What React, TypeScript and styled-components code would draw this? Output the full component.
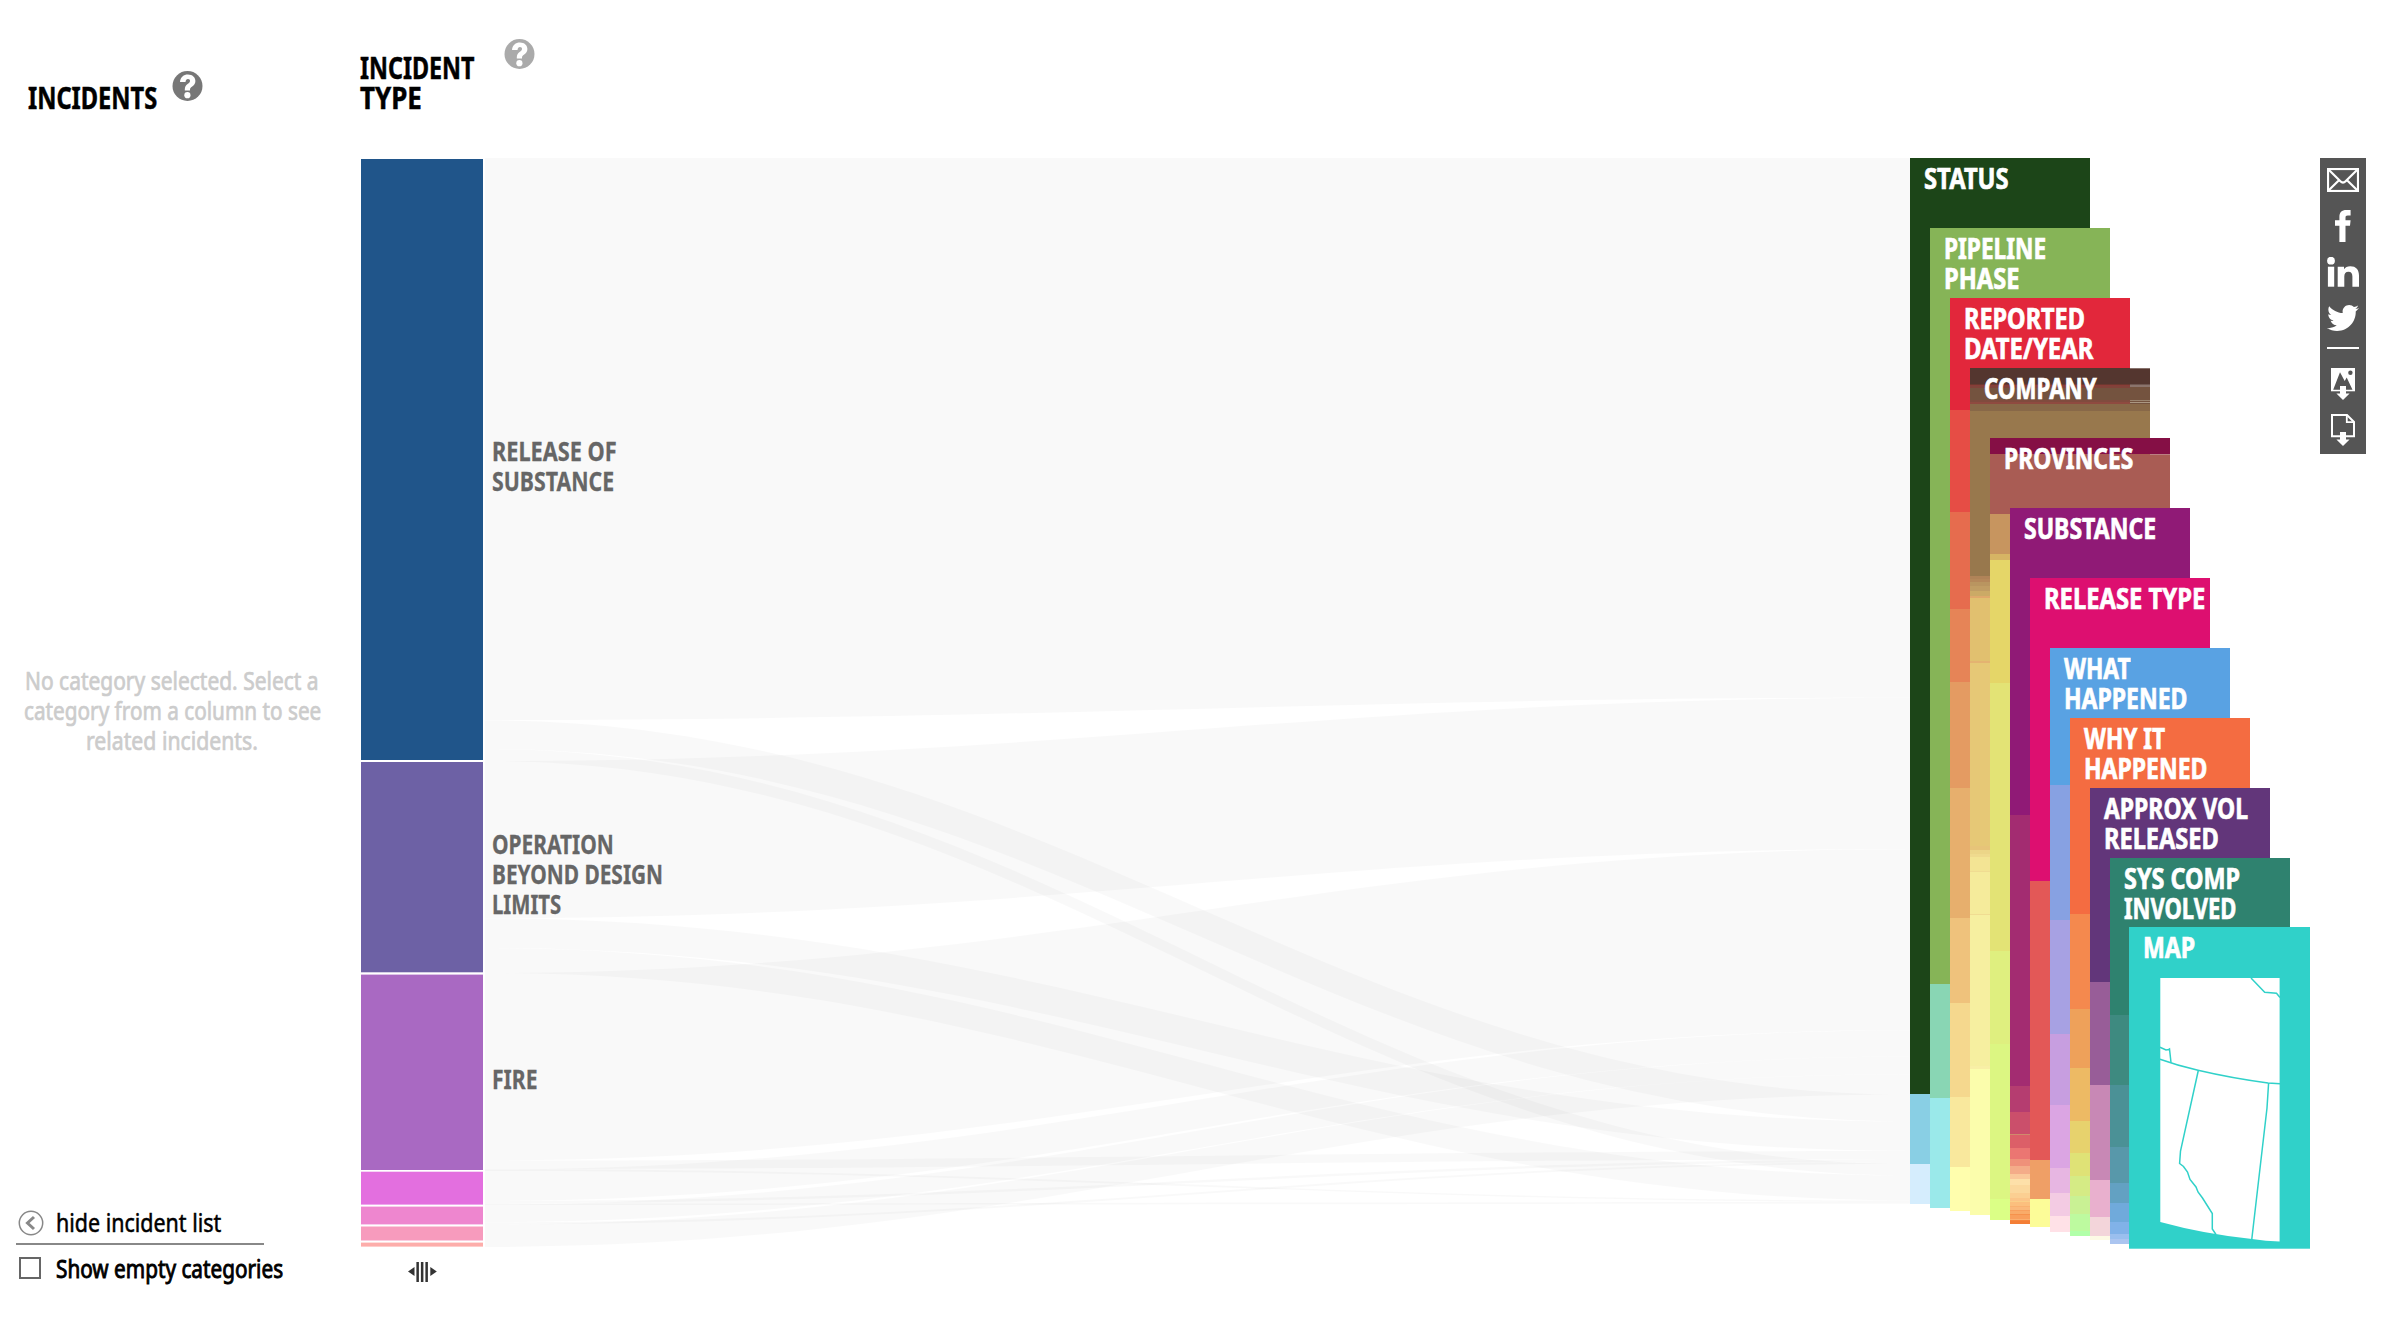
import React, { useLayoutEffect, useRef, useState } from "react";
import styled, { createGlobalStyle } from "styled-components";
import { FaTwitter } from "react-icons/fa";

const GlobalStyle = createGlobalStyle`
  * { box-sizing: border-box; }
  body { margin: 0; background: #fff; font-family: "Noto Sans", "Open Sans", sans-serif; }
`;

const Page = styled.div`
  display: flex;
  width: 2382px;
  height: 1320px;
  overflow: hidden;
  background: #fff;
`;

/* A line of type condensed to a set measure. */
const LineBox = styled.span<{ $width: number }>`
  display: block;
  width: ${(p) => p.$width}px;
  white-space: nowrap;
`;
const LineInner = styled.span`
  display: inline-block;
  transform-origin: 0 50%;
`;

function Line({ width, children }: { width: number; children: string }) {
  const ref = useRef<HTMLSpanElement>(null);
  const [scale, setScale] = useState(0.8);
  useLayoutEffect(() => {
    if (ref.current) setScale(width / ref.current.offsetWidth);
  }, [width]);
  return (
    <LineBox $width={width}>
      <LineInner ref={ref} style={{ transform: `scaleX(${scale})` }}>
        {children}
      </LineInner>
    </LineBox>
  );
}

type TextLine = [string, number];
const lines = (items: TextLine[]) =>
  items.map(([text, width], i) => (
    <Line key={i} width={width}>
      {text}
    </Line>
  ));

/* Incident list pane */
const IncidentPane = styled.aside`
  display: flex;
  flex-direction: column;
  flex: none;
  width: 361px;
`;
const PaneHeader = styled.header`
  display: flex;
  align-items: flex-start;
  height: 158px;
  padding: 71px 0 0 28px;
`;
const Heading = styled.h1<{ $drop?: number; $pull?: number }>`
  margin: ${(p) => p.$drop ?? 0}px 0 0 ${(p) => -(p.$pull ?? 0)}px;
  font-size: 29.5px;
  line-height: 30px;
  font-weight: 700;
  color: #000;
  -webkit-text-stroke: 0.5px #000;
`;
const HelpButton = styled.button<{ $color: string; $gap: number }>`
  margin: 0 0 0 ${(p) => p.$gap}px;
  padding: 0;
  border: 0;
  width: 31px;
  height: 31px;
  border-radius: 50%;
  background: none;
  color: ${(p) => p.$color};
  svg { display: block; }
`;
const EmptyMessage = styled.div`
  display: flex;
  flex-direction: column;
  align-items: center;
  flex: 1;
  padding: 507px 17px 0 0;
  font-size: 25px;
  line-height: 30px;
  color: #ccc;
  -webkit-text-stroke: 0.7px #ccc;
`;
const PaneFooter = styled.footer`
  display: flex;
  flex-direction: column;
  width: 248px;
  height: 112px;
  margin-left: 16px;
`;
const FooterRow = styled.div<{ $gap: number; $medium?: boolean }>`
  display: flex;
  align-items: center;
  gap: ${(p) => p.$gap}px;
  padding-left: 2px;
  font-size: 24.5px;
  line-height: 30px;
  color: #000;
  -webkit-text-stroke: ${(p) => (p.$medium ? 0.9 : 0.5)}px #000;
  svg { flex: none; -webkit-text-stroke: 0; }
`;
const Rule = styled.div`
  flex: none;
  height: 2px;
  margin: 5px 0 9px;
  background: #888;
`;
const Checkbox = styled.span`
  flex: none;
  width: 22px;
  height: 22px;
  margin: -3px 0 0 1px;
  border: 2px solid #666;
  background: #fff;
`;

/* Flow chart */
const ChartPane = styled.main`
  display: flex;
  flex-direction: column;
  flex: none;
  width: 1549px;
`;
const ChartHeader = styled.header`
  display: flex;
  align-items: flex-start;
  height: 158px;
  padding-top: 39px;
`;
const ChartArea = styled.div`
  position: relative;
  height: 1162px;
  svg { display: block; }
`;
const CategoryLabel = styled.div<{ $top: number }>`
  position: absolute;
  left: 130.7px;
  top: ${(p) => p.$top}px;
  font-size: 26px;
  line-height: 30px;
  font-weight: 700;
  color: #666;
  -webkit-text-stroke: 0.3px #666;
`;

/* Stacked columns */
const Stack = styled.section`
  display: flex;
  flex: none;
  width: 410px;
  height: 1320px;
`;
const Slot = styled.div<{ $top: number; $shift?: number }>`
  flex: none;
  width: 20px;
  padding-top: ${(p) => p.$top}px;
  margin-left: ${(p) => p.$shift ?? 0}px;
`;
const Column = styled.div`
  position: relative;
  width: 180px;
`;
const Segment = styled.div<{ $height: number; $color: string }>`
  height: ${(p) => p.$height}px;
  background: ${(p) => p.$color};
`;
const ColumnTitle = styled.h2<{ $left?: number }>`
  position: absolute;
  left: ${(p) => p.$left ?? 13.7}px;
  top: 4.5px;
  margin: 0;
  font-size: 28.5px;
  line-height: 30px;
  font-weight: 700;
  color: #fff;
  -webkit-text-stroke: 0.7px #fff;
`;
const Glint = styled.div<{ $top: number; $height: number; $color: string }>`
  position: absolute;
  right: 0;
  top: ${(p) => p.$top}px;
  width: 20px;
  height: ${(p) => p.$height}px;
  background: ${(p) => p.$color};
`;
const MapPanel = styled.div`
  position: relative;
  width: 181px;
  height: 322px;
  svg { display: block; }
`;

/* Share bar */
const ShareBar = styled.nav`
  display: flex;
  flex-direction: column;
  align-items: center;
  flex: none;
  width: 46px;
  height: 296px;
  margin-top: 158px;
  background: #555;
  color: #fff;
`;
const ShareItem = styled.a<{ $height: number; $pad: number }>`
  flex: none;
  height: ${(p) => p.$height}px;
  padding-top: ${(p) => p.$pad}px;
  svg { display: block; }
`;
const ShareDivider = styled.div`
  flex: none;
  width: 32px;
  height: 2px;
  background: #fff;
`;

function HelpIcon() {
  return (
    <svg width="31" height="31" viewBox="0 0 31 31">
      <circle cx="15.5" cy="15" r="15" fill="currentColor" />
      <path
        d="M8 11C8.4 6 11.6 3.4 16 3.4C20.4 3.4 23.4 6.2 23.4 10C23.4 12.8 22 14.2 20.2 15.5C18.6 16.7 18 17.2 18 19V19.4H12.8V18.6C12.8 15.6 13.8 14.4 15.6 13C17.2 11.8 18 11.2 18 9.8C18 8.6 17.2 7.9 16 7.9C14.6 7.9 13.7 8.9 13.5 11Z"
        fill="#fff"
      />
      <circle cx="15.4" cy="24.2" r="3.1" fill="#fff" />
    </svg>
  );
}

const CHART = { x0: 124, x1: 1549, top: 158 };

/* [left top, left bottom, right top, right bottom] */
const ribbons: number[][] = [
  [158, 720, 158, 697.7],
  [720.2, 749, 1094.5, 1121.5],
  [749, 761, 1164, 1175.5],
  [761, 918.2, 697.7, 849],
  [918.2, 948, 1121.5, 1151],
  [948, 973, 1175.5, 1200.5],
  [973, 1160.5, 849, 1030.3],
  [1160.5, 1169, 1151, 1159.5],
  [1169, 1171, 1200.5, 1202],
  [1169.5, 1201, 1030.3, 1056.6],
  [1201, 1203.5, 1159.5, 1162],
  [1203.5, 1205, 1202, 1203.7],
  [1204.5, 1222.3, 1056.6, 1074.2],
  [1222.3, 1224.5, 1162, 1164],
  [1224.5, 1247, 1074.2, 1094.5],
];

const bars: [number, number, string][] = [
  [159, 760, "#20558a"],
  [762, 972.3, "#6d61a5"],
  [974.6, 1170, "#a969c2"],
  [1171.7, 1204.6, "#e36fdf"],
  [1206.6, 1224.4, "#ee86cf"],
  [1226.5, 1240.5, "#f79bbd"],
  [1242.6, 1246.6, "#fdadaa"],
];

function ribbonPath([a, b, c, d]: number[]) {
  const { x0, x1, top } = CHART;
  const w = x1 - x0;
  const p = x0 + w * 0.4;
  const q = x1 - w * 0.4;
  return `M${x0} ${a - top}C${p} ${a - top} ${q} ${c - top} ${x1} ${c - top}V${d - top}C${q} ${d - top} ${p} ${b - top} ${x0} ${b - top}Z`;
}

function FlowChart() {
  return (
    <svg width="1549" height="1162" viewBox="0 0 1549 1162">
      {ribbons.map((r, i) => (
        <path key={i} d={ribbonPath(r)} fill="#000" fillOpacity="0.024" />
      ))}
      {bars.map(([a, b, color]) => (
        <rect key={a} x="0" y={a - CHART.top} width="122" height={b - a} fill={color} />
      ))}
      <g fill="#333">
        <path d="M47 1113.5L53.5 1109V1118Z" />
        <path d="M75.8 1113.5L69.3 1109V1118Z" />
        <rect x="55.4" y="1104" width="2.5" height="20" />
        <rect x="59.9" y="1104" width="2.5" height="20" />
        <rect x="64.4" y="1104" width="2.5" height="20" />
      </g>
    </svg>
  );
}

interface ColumnData {
  title: TextLine[];
  /* [start, colour]; each segment runs to the next one's start */
  segments: [number, string][];
  end: number;
  glints?: [number, number, string][];
}

const columns: ColumnData[] = [
  {
    title: [["STATUS", 85]],
    segments: [[158, "#1c4518"], [1094, "#89cfe4"], [1164, "#d5edfd"]],
    end: 1203.7,
  },
  {
    title: [["PIPELINE", 102.5], ["PHASE", 75.5]],
    segments: [[228, "#86b457"], [984.4, "#89d6b4"], [1098, "#9ae9ea"]],
    end: 1207.7,
  },
  {
    title: [["REPORTED", 121], ["DATE/YEAR", 129]],
    segments: [
      [298, "#e2273b"], [410, "#e64d45"], [512, "#e66c4e"], [609, "#e68457"], [682.4, "#e49b62"],
      [787.6, "#e7af6d"], [918.4, "#efc27c"], [1003, "#f5d88e"], [1097.4, "#f9e89d"], [1167, "#fffead"],
    ],
    end: 1211.4,
  },
  {
    title: [["COMPANY", 112.5]],
    segments: [
      [368, "#54362f"], [384, "#6b382f"], [385, "#883d38"], [386, "#80433a"], [388, "#74533f"], [400, "#804b3e"],
      [402, "#8f4a40"], [404, "#886848"],
      [411, "#98784d"], [576, "#b08358"], [579, "#b5885a"], [582, "#b99560"], [586, "#c09d64"], [591, "#cbaa66"],
      [596, "#dfa96b"], [598, "#e1c06f"], [661, "#e4b371"], [663, "#e6c876"], [846, "#e7c479"], [850, "#ecd588"],
      [854, "#efda8e"], [857, "#f3e494"], [871, "#f0dc92"], [872, "#f5eb9b"], [914, "#f0dc92"], [915, "#f6efa0"],
      [1066, "#f8efa6"], [1069, "#fbfdac"],
    ],
    end: 1215.4,
    glints: [[0, 1, "#87726d"], [16, 1, "#6f564f"], [17, 2, "#8b746c"], [19, 17, "#74533f"], [32, 1, "#9a846f"], [34, 1, "#ab9782"]],
  },
  {
    title: [["PROVINCES", 129]],
    segments: [
      [438, "#850f45"], [454, "#a95c54"], [514, "#c7955f"], [554, "#d6b464"], [559.5, "#e5d668"],
      [683, "#e3e375"], [951, "#dfef7f"], [1044, "#dcf682"], [1199, "#dbff86"],
    ],
    end: 1219.6,
    glints: [[16, 1, "#bb7e81"]],
  },
  {
    title: [["SUBSTANCE", 132.5]],
    segments: [
      [508, "#901a76"], [815, "#a32c71"], [1086.4, "#b53d70"], [1111.6, "#cb4f6b"], [1134, "#cf8a6c"], [1135, "#dc5f68"],
      [1148, "#eb7672"], [1159, "#ef917a"], [1166, "#f4ac89"], [1174, "#fac89a"], [1179, "#fde0a9"],
      [1185, "#fbd89d"], [1193, "#fbcf92"], [1198, "#fbc588"], [1201, "#facf88"], [1202, "#fbbf7e"], [1206, "#f9b170"],
      [1207, "#fab97b"], [1210, "#f8a05e"], [1211, "#f9ab69"], [1214, "#f6924c"], [1215, "#f99f5c"], [1219, "#fbb070"], [1220, "#f5853c"], [1221, "#f47e36"],
    ],
    end: 1223.6,
  },
  {
    title: [["RELEASE TYPE", 161]],
    segments: [[578, "#dd0f70"], [881, "#e35857"], [1160, "#ef9f66"], [1199, "#fcfc98"]],
    end: 1227.4,
  },
  {
    title: [["WHAT", 67], ["HAPPENED", 123.5]],
    segments: [
      [648, "#59a2e3"], [784.5, "#87a1e2"], [920, "#a7a1e3"], [1033.6, "#c79ee0"], [1105, "#dba5e3"],
      [1168, "#e7b6e2"], [1193, "#f3cbe3"], [1216, "#ffe1e7"],
    ],
    end: 1231.6,
  },
  {
    title: [["WHY IT", 81], ["HAPPENED", 123.5]],
    segments: [
      [718, "#f46c41"], [914, "#f4894e"], [1009, "#eea15a"], [1068, "#edba64"], [1121, "#e7d26d"],
      [1153, "#dfe276"], [1176, "#d5eb85"], [1196, "#c9f194"], [1214, "#bdfa9f"], [1231, "#b1ffa9"],
    ],
    end: 1235.6,
  },
  {
    title: [["APPROX VOL", 144], ["RELEASED", 115]],
    segments: [
      [788, "#62367a"], [982, "#985d98"], [1084.6, "#c888b5"], [1180, "#e9b0ce"], [1217, "#f3d5da"], [1236, "#fdfae5"],
    ],
    end: 1239.6,
  },
  {
    title: [["SYS COMP", 116.5], ["INVOLVED", 112.5]],
    segments: [
      [858, "#2f826f"], [1015, "#3e8a80"], [1085, "#4b9196"], [1147, "#5898aa"], [1183, "#63a1c2"],
      [1203, "#70aadb"], [1222, "#81b2e8"], [1234, "#9abfee"], [1239, "#abc5f0"],
    ],
    end: 1243.6,
  },
];

function StackColumn({ data }: { data: ColumnData }) {
  const top = data.segments[0][0];
  return (
    <Slot $top={top}>
      <Column>
        {data.segments.map(([start, color], i) => {
          const next = i + 1 < data.segments.length ? data.segments[i + 1][0] : data.end;
          return <Segment key={start} $height={next - start} $color={color} />;
        })}
        {data.glints?.map(([y, h, color]) => <Glint key={y} $top={y} $height={h} $color={color} />)}
        <ColumnTitle>{lines(data.title)}</ColumnTitle>
      </Column>
    </Slot>
  );
}

function RegionMap() {
  return (
    <svg width="181" height="322" viewBox="2129 927 181 322">
      <rect x="2129" y="927" width="181" height="321.7" fill="#30d1c9" />
      <path d="M2160.3 978H2279.6V1241.5Q2266 1241 2252 1239Q2204 1234 2160.3 1222Z" fill="#fff" />
      <g fill="none" stroke="#30d1c9" strokeWidth="1.5">
        <path d="M2251 978L2264.7 992.3L2276.5 993.3L2280 997.5" />
        <path d="M2160 1047.3L2166 1050L2168.7 1049.5L2169.5 1049L2171 1062.5" />
        <path d="M2160 1059.3Q2178 1065.8 2198 1070.3Q2232 1078.3 2268 1083L2280 1083.7" />
        <path d="M2198.3 1070.5L2180.5 1151L2179.6 1163.5L2183.5 1166.5L2187.5 1172L2190 1179.5L2196 1187L2198 1192L2202.5 1198L2212.3 1213.5V1229L2216 1234.5" />
        <path d="M2268.6 1083L2267 1108L2251.7 1240" />
      </g>
    </svg>
  );
}

function EnvelopeIcon() {
  return (
    <svg width="32" height="24" viewBox="0 0 32 24" fill="none" stroke="#fff" strokeWidth="2.2">
      <rect x="1" y="1" width="30" height="22" />
      <path d="M2 2L13.4 13.2Q16 15.8 18.6 13.2L30 2M2 22L12.2 12M30 22L19.8 12" />
    </svg>
  );
}
function FacebookIcon() {
  return (
    <svg width="16" height="32" viewBox="0 0 16 32" fill="#fff">
      <path d="M4.4 32V15.8H0V10.2H4.4V7.2C4.4 2.4 6.6 0 11.4 0H15.6V5.6H12.8C11 5.6 10.5 6.3 10.5 8V10.2H15.6L15 15.8H10.5V32Z" />
    </svg>
  );
}
function LinkedinIcon() {
  return (
    <svg width="32" height="30" viewBox="0 0 32 30" fill="#fff">
      <circle cx="4" cy="3.7" r="3.9" />
      <rect x="0.9" y="9.7" width="6.3" height="20" />
      <path d="M10.7 9.7H17V12.3C18.2 10.3 20.4 9.2 23.2 9.2C29.2 9.2 32 12.6 32 18.6V29.7H25.4V19.5C25.4 16.4 24.2 14.8 21.5 14.8C18.6 14.8 17.3 16.6 17.3 19.6V29.7H10.7Z" />
    </svg>
  );
}
function SaveImageIcon() {
  return (
    <svg width="24" height="32" viewBox="0 0 24 32">
      <path d="M0 0H24V23.3H0Z" fill="#fff" />
      <path d="M2.2 21.8L9 4.3L13.7 13L15.7 9.5L21.5 21.8Z" fill="#555" />
      <circle cx="19.4" cy="4.8" r="2.2" fill="#555" />
      <path d="M9 18H15V25.5H18.6L12 32L5.4 25.5H9Z" fill="#fff" />
    </svg>
  );
}
function SaveFileIcon() {
  return (
    <svg width="24" height="32" viewBox="0 0 24 32">
      <path d="M1 1H16L23 8V22.3H1Z" fill="none" stroke="#fff" strokeWidth="2" />
      <path d="M15.8 1.2V8.2H23" fill="none" stroke="#fff" strokeWidth="1.8" />
      <path d="M9 18H15V25.5H18.6L12 32L5.4 25.5H9Z" fill="#fff" />
    </svg>
  );
}

export default function App() {
  return (
    <>
      <GlobalStyle />
      <Page>
        <IncidentPane>
          <PaneHeader>
            <Heading $drop={11.5}>{lines([["INCIDENTS", 129]])}</Heading>
            <HelpButton $color="#777" $gap={14.5} aria-label="About incidents">
              <HelpIcon />
            </HelpButton>
          </PaneHeader>
          <EmptyMessage>
            {lines([
              ["No category selected. Select a", 293.5],
              ["category from a column to see", 297],
              ["related incidents.", 171.5],
            ])}
          </EmptyMessage>
          <PaneFooter>
            <FooterRow $gap={12}>
              <svg width="26" height="26" viewBox="0 0 26 26" fill="none" stroke="#888">
                <circle cx="13" cy="13" r="11.7" strokeWidth="1.5" />
                <path d="M16 7L9.5 13L16 19" strokeWidth="3" />
              </svg>
              {lines([["hide incident list", 165.5]])}
            </FooterRow>
            <Rule />
            <FooterRow $gap={15} $medium>
              <Checkbox />
              {lines([["Show empty categories", 227]])}
            </FooterRow>
          </PaneFooter>
        </IncidentPane>

        <ChartPane>
          <ChartHeader>
            <Heading $drop={13.5} $pull={1}>{lines([["INCIDENT", 114.5], ["TYPE", 61.5]])}</Heading>
            <HelpButton $color="#aaa" $gap={29.5} aria-label="About incident type">
              <HelpIcon />
            </HelpButton>
          </ChartHeader>
          <ChartArea>
            <FlowChart />
            <CategoryLabel $top={277.5}>{lines([["RELEASE OF", 124.5], ["SUBSTANCE", 122]])}</CategoryLabel>
            <CategoryLabel $top={670.5}>
              {lines([["OPERATION", 121.5], ["BEYOND DESIGN", 171], ["LIMITS", 69.5]])}
            </CategoryLabel>
            <CategoryLabel $top={905.5}>{lines([["FIRE", 45.5]])}</CategoryLabel>
          </ChartArea>
        </ChartPane>

        <Stack>
          {columns.map((c, i) => (
            <StackColumn key={i} data={c} />
          ))}
          <Slot $top={927} $shift={-1}>
            <MapPanel>
              <RegionMap />
              <ColumnTitle $left={14.3}>{lines([["MAP", 52]])}</ColumnTitle>
            </MapPanel>
          </Slot>
        </Stack>

        <ShareBar>
          <ShareItem $height={52} $pad={10}><EnvelopeIcon /></ShareItem>
          <ShareItem $height={47} $pad={0}><FacebookIcon /></ShareItem>
          <ShareItem $height={45} $pad={0}><LinkedinIcon /></ShareItem>
          <ShareItem $height={45} $pad={0}><FaTwitter size={32} /></ShareItem>
          <ShareDivider />
          <ShareItem $height={65} $pad={19}><SaveImageIcon /></ShareItem>
          <ShareItem $height={40} $pad={0}><SaveFileIcon /></ShareItem>
        </ShareBar>
      </Page>
    </>
  );
}
